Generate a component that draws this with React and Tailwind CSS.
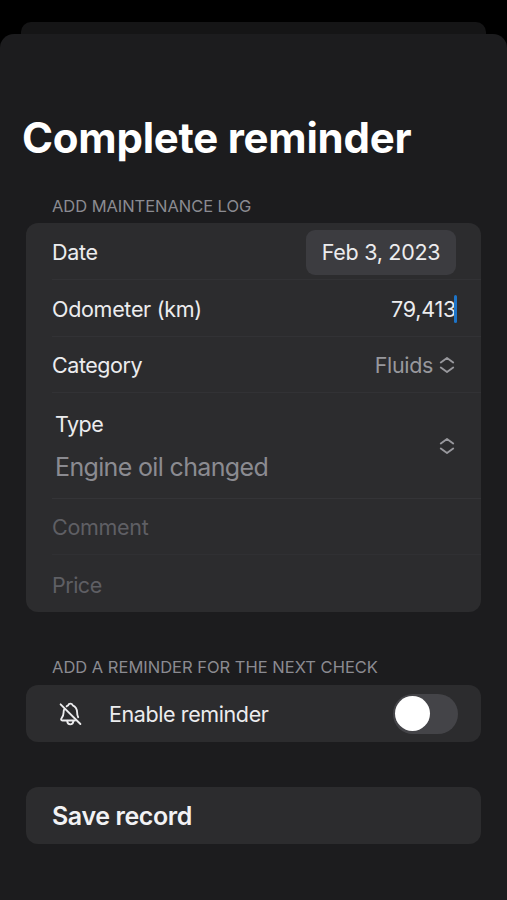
import React, { useState } from 'react';

const SelectorIcon = () => (
  <svg className="shrink-0" width="16" height="18" viewBox="0 0 16 18" fill="none" stroke="#98989d" strokeWidth="1.9" strokeLinecap="round" strokeLinejoin="round">
    <path d="M1.800 6.400 8 1.900l6.200 4.500" />
    <path d="M1.800 11.600 8 16.100l6.200-4.500" />
  </svg>
);

const BellSlashIcon = () => (
  <svg width="24" height="26" viewBox="0 0 24 26" fill="none" stroke="#ececee" strokeWidth="1.85" strokeLinecap="round" strokeLinejoin="round">
    <path d="M8.600 5.400C9 4.900 9.600 4.500 10.200 4.300 10.500 3.200 11.300 2.600 12.400 2.600s1.900.6 2.300 1.700c2.700 1.200 4.300 3.600 4.400 7 0 2 .3 3.400 1.100 4.900" />
    <path d="M6.200 8.400c-.5 1-.6 2-.6 3.200 0 3-.6 4-2.100 5.700-.8 1-.5 2.200.9 2.200H17" />
    <path d="M9.200 19.800c.2 2.400 1.400 3.500 3.100 3.500s2.900-1.100 3.100-3.500" />
    <path d="M2.600 3.300 22.400 23" />
  </svg>
);

const SectionTitle = ({ children }) => (
  <h2 className="pl-[26px] text-[16.5px] leading-5 text-[#8b8b91] whitespace-nowrap">{children}</h2>
);

const App = () => {
  const [enabled, setEnabled] = useState(false);

  return (
    <div className="h-[900px] w-full overflow-hidden bg-black pt-[22px] font-['Inter',sans-serif] text-[#ececee]">
      <div className="mx-[21px] h-[12px] rounded-t-[10px] bg-[#151516]" />
      <main className="h-[866px] rounded-t-[14px] bg-[#1c1c1e] pt-[78px]">
        <h1 className="pl-[22px] text-[42px] font-bold leading-[52px] tracking-[-0.25px] text-white whitespace-nowrap">
          Complete reminder
        </h1>

        <div className="flex flex-col px-[26px] pt-[32px]">
          <SectionTitle><span className="tracking-[-0.05px]">ADD MAINTENANCE LOG</span></SectionTitle>
          <section className="mt-[7px] h-[389px] rounded-[12px] bg-[#2c2c2e] pl-[26px] text-[21.5px] tracking-[-0.3px]">
            <div className="flex h-[57px] items-center justify-between border-b border-[#323235] pt-[2px] pr-[25px]">
              <span>Date</span>
              <button className="h-[45px] w-[150px] rounded-[9px] bg-[#3c3c40] text-center">Feb 3, 2023</button>
            </div>
            <div className="flex h-[57px] items-center justify-between border-b border-[#323235] pt-[2px] pr-[24px]">
              <span>Odometer (km)</span>
              <span className="flex items-center">
                <span className="tracking-[-0.25px]">79,413</span>
                <span className="-ml-[2px] h-[28px] w-[3px] rounded-full bg-[#1d74c8]" />
              </span>
            </div>
            <div className="flex h-[56px] items-center justify-between border-b border-[#323235] pt-[2px] pr-[26px]">
              <span className="tracking-[-0.45px]">Category</span>
              <span className="flex items-center gap-[6px] text-[#98989d]">
                <span className="tracking-[-0.35px]">Fluids</span>
                <span className="mb-[2px]"><SelectorIcon /></span>
              </span>
            </div>
            <div className="flex h-[106px] items-center justify-between border-b border-[#343437] pl-[3px] pr-[26px]">
              <div className="flex flex-col gap-[10px] whitespace-nowrap">
                <span className="leading-[32px] tracking-[-0.5px]">Type</span>
                <span className="text-[25px] leading-[34px] tracking-[-0.65px] text-[#8b8b91]">Engine oil changed</span>
              </div>
              <SelectorIcon />
            </div>
            <div className="flex h-[56px] items-center border-b border-[#303033] pt-[2px] text-[#5f5f64]">Comment</div>
            <div className="flex h-[57px] items-center pt-[3px] tracking-[-0.5px] text-[#5f5f64]">Price</div>
          </section>

          <div className="h-[45px]" />
          <SectionTitle><span className="tracking-[0px]">ADD A REMINDER FOR THE NEXT CHECK</span></SectionTitle>
          <section className="mt-[8px] flex h-[57px] items-center rounded-[12px] bg-[#2c2c2e] pl-[32px] pr-[23px] text-[21.5px] tracking-[-0.4px]">
            <BellSlashIcon />
            <span className="ml-[27px] grow pt-[2px]">Enable reminder</span>
            <button
              onClick={() => setEnabled(!enabled)}
              className={`flex h-[40px] w-[65px] items-center rounded-full px-[2px] ${enabled ? 'justify-end bg-green-500' : 'bg-[#444448]'}`}
            >
              <span className="size-[35px] rounded-full bg-white" />
            </button>
          </section>

          <button className="mt-[45px] h-[57px] rounded-[12px] bg-[#2c2c2e] pl-[26px] pt-[2px] text-left text-[25px] font-semibold tracking-[-0.4px] text-[#f2f2f4]">
            Save record
          </button>
        </div>
      </main>
    </div>
  );
};

export default App;
